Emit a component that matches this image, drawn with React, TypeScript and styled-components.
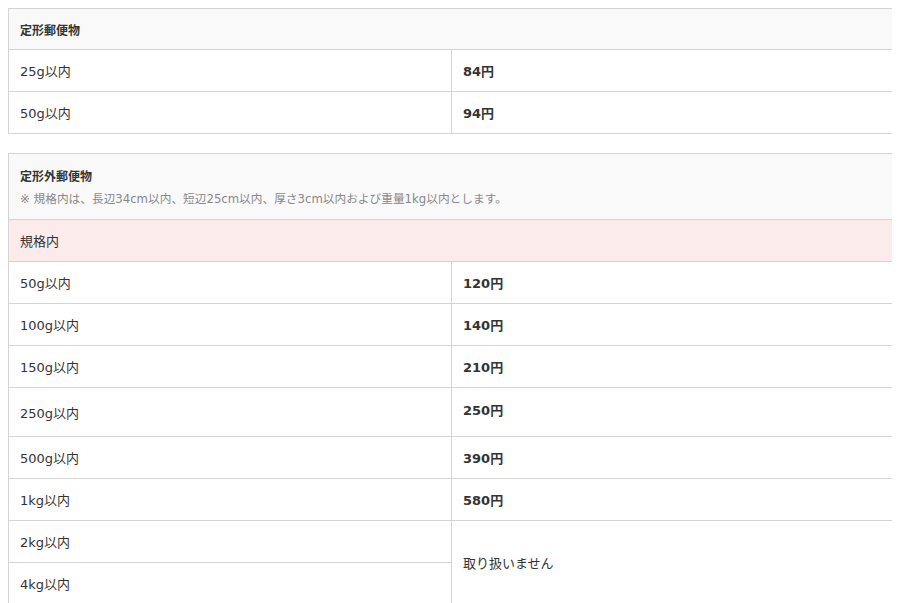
import React from "react";
import styled, { createGlobalStyle } from "styled-components";

const Global = createGlobalStyle`
  html, body { overflow: hidden; }
  body { margin: 8px; background: #fff; font-family: "DejaVu Sans", "Noto Sans CJK JP", sans-serif; color: #333; }
`;

const Table = styled.table<{ $mb?: number }>`
  width: 886px;
  border-collapse: collapse;
  table-layout: fixed;
  margin-bottom: ${(p) => p.$mb ?? 0}px;
  font-size: 13px;
`;

const Cell = styled.td<{ $h?: number; $bold?: boolean; $top?: boolean }>`
  border: 1px solid #d4d4d4;
  padding: 0 11px;
  height: ${(p) => p.$h ?? 42}px;
  vertical-align: ${(p) => (p.$top ? "top" : "middle")};
  padding-top: ${(p) => (p.$top ? "12px" : "0")};
  font-weight: ${(p) => (p.$bold ? "bold" : "normal")};
  box-sizing: border-box;
`;

const Head = styled.th<{ $h: number }>`
  border: 1px solid #d4d4d4;
  background: #f9f9f9;
  text-align: left;
  padding: 0 11px;
  height: ${(p) => p.$h - 1}px;
  font-size: 12px;
  font-weight: bold;
`;

const Sub = styled.td`
  border: 1px solid #d4d4d4;
  background: #fbeceb;
  padding: 0 11px;
  height: 42px;
  box-sizing: border-box;
`;

const Note = styled.div`
  font-size: 11.7px;
  font-weight: normal;
  color: #888;
  margin-top: 5px;
`;

const rows1 = [["25g以内", "84円"], ["50g以内", "94円"]];
const rows2: [string, string, number][] = [
  ["50g以内", "120円", 42],
  ["100g以内", "140円", 42],
  ["150g以内", "210円", 42],
  ["250g以内", "250円", 49],
  ["500g以内", "390円", 42],
  ["1kg以内", "580円", 42],
];

export default function App() {
  return (
    <>
      <Global />
      <Table $mb={19}>
        <colgroup><col style={{ width: 443 }} /><col /></colgroup>
        <thead><tr><Head $h={41} colSpan={2}>定形郵便物</Head></tr></thead>
        <tbody>
          {rows1.map(([a, b]) => (
            <tr key={a}><Cell>{a}</Cell><Cell $bold>{b}</Cell></tr>
          ))}
        </tbody>
      </Table>
      <Table>
        <colgroup><col style={{ width: 443 }} /><col /></colgroup>
        <thead>
          <tr>
            <Head $h={66} colSpan={2}>
              定形外郵便物
              <Note>※ 規格内は、長辺34cm以内、短辺25cm以内、厚さ3cm以内および重量1kg以内とします。</Note>
            </Head>
          </tr>
        </thead>
        <tbody>
          <tr><Sub colSpan={2}>規格内</Sub></tr>
          {rows2.map(([a, b, h]) => (
            <tr key={a}><Cell $h={h}>{a}</Cell><Cell $h={h} $bold $top={h > 42}>{b}</Cell></tr>
          ))}
          <tr><Cell>2kg以内</Cell><Cell rowSpan={2}>取り扱いません</Cell></tr>
          <tr><Cell>4kg以内</Cell></tr>
        </tbody>
      </Table>
    </>
  );
}
